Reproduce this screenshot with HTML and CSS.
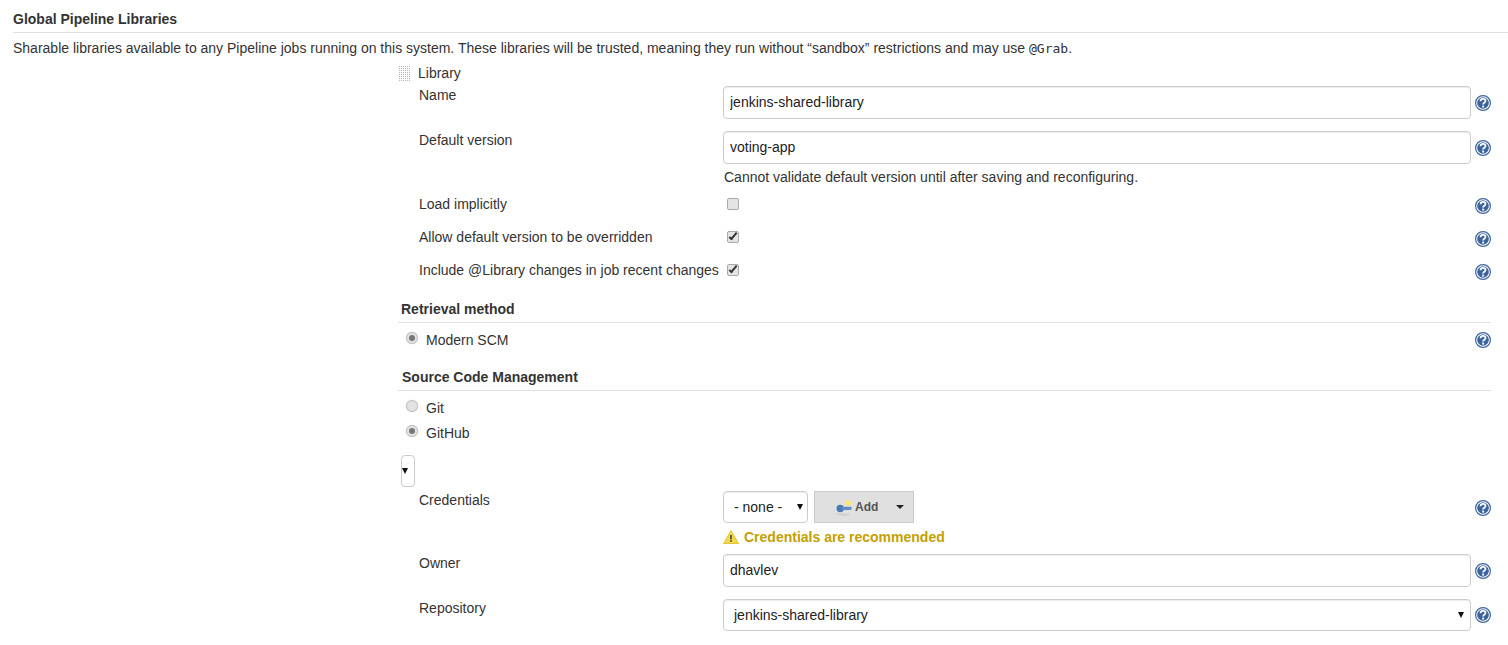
FILE: index.html
```html
<!DOCTYPE html>
<html lang="en">
<head>
    <meta charset="UTF-8">
    <title>Global Pipeline Libraries</title>
    <link rel="stylesheet" href="styles.css">
</head>
<body>
    <svg class="defs" width="0" height="0">
        <symbol id="help" viewBox="0 0 16 16">
            <circle cx="8" cy="8" r="7.4" fill="#fff" stroke="#3f66a0" stroke-width="1.2"/>
            <circle cx="8" cy="8" r="5.8" fill="#3d639c"/>
            <path d="M5.600 6.200c0-1.400 1-2.300 2.500-2.300s2.400.9 2.400 2.100c0 1.800-2.400 1.800-2.400 3.500" fill="none" stroke="#fff" stroke-width="1.800"/>
            <rect x="7.200" y="10.600" width="1.900" height="1.900" fill="#fff"/>
        </symbol>
    </svg>

    <h2 class="section-title">Global Pipeline Libraries</h2>
    <p class="description">Sharable libraries available to any Pipeline jobs running on this system. These libraries will be trusted, meaning they run without “sandbox” restrictions and may use <code>@Grab</code>.</p>

    <div class="library">
        <div class="library-head">
            <span class="grip"></span>
            <span>Library</span>
        </div>

        <div class="row row-input row-first">
            <label class="label">Name</label>
            <input class="text" type="text" value="jenkins-shared-library">
            <svg class="help"><use href="#help"/></svg>
        </div>
        <div class="row row-input">
            <label class="label">Default version</label>
            <input class="text" type="text" value="voting-app">
            <svg class="help"><use href="#help"/></svg>
        </div>
        <div class="note">Cannot validate default version until after saving and reconfiguring.</div>

        <div class="row row-check">
            <label class="label">Load implicitly</label>
            <input class="check" type="checkbox">
            <svg class="help"><use href="#help"/></svg>
        </div>
        <div class="row row-check">
            <label class="label">Allow default version to be overridden</label>
            <input class="check" type="checkbox" checked>
            <svg class="help"><use href="#help"/></svg>
        </div>
        <div class="row row-check">
            <label class="label">Include @Library changes in job recent changes</label>
            <input class="check" type="checkbox" checked>
            <svg class="help"><use href="#help"/></svg>
        </div>

        <h3 class="sub-title sub-retrieval">Retrieval method</h3>
        <div class="radio-row radio-scm">
            <span class="radio-label"><input class="radio" type="radio" name="retrieval" checked>Modern SCM</span>
            <svg class="help"><use href="#help"/></svg>
        </div>

        <h3 class="sub-title sub-source">Source Code Management</h3>
        <div class="radio-row radio-git">
            <span class="radio-label"><input class="radio" type="radio" name="scm">Git</span>
        </div>
        <div class="radio-row">
            <span class="radio-label"><input class="radio" type="radio" name="scm" checked>GitHub</span>
        </div>

        <button class="collapse" type="button"><span class="arrow"></span></button>

        <div class="row row-creds">
            <label class="label">Credentials</label>
            <div class="creds">
                <div class="select select-none">- none -<span class="arrow"></span></div>
                <div class="add">
                    <svg class="key" width="16" height="17" viewBox="0 0 16 17">
                        <ellipse cx="7" cy="15.500" rx="6.500" ry="1" fill="#cdcdcd"/>
                        <circle cx="12" cy="4" r="2.800" fill="#f5ea62"/>
                        <circle cx="4.200" cy="9.500" r="3.700" fill="#4a7ab5"/>
                        <path d="M6 7.800h9.500v2.400l-1 .8h-8.500z" fill="#5f8cc2"/>
                    </svg>
                    <span>Add</span>
                    <span class="add-arrow"></span>
                </div>
            </div>
            <svg class="help"><use href="#help"/></svg>
        </div>
        <div class="warning">
            <svg width="16" height="14" viewBox="0 0 16 14">
                <path d="M8 .5 15.500 13.500H.5z" fill="#f0d94c" stroke="#e2c63a" stroke-linejoin="round"/>
                <rect x="7.200" y="5" width="1.600" height="4.400" fill="#444"/>
                <rect x="7.200" y="10.200" width="1.600" height="1.600" fill="#444"/>
            </svg>
            <span>Credentials are recommended</span>
        </div>

        <div class="row row-input">
            <label class="label">Owner</label>
            <input class="text" type="text" value="dhavlev">
            <svg class="help"><use href="#help"/></svg>
        </div>
        <div class="row row-input row-repo">
            <label class="label">Repository</label>
            <div class="select select-wide">jenkins-shared-library<span class="arrow"></span></div>
            <svg class="help"><use href="#help"/></svg>
        </div>
    </div>
</body>
</html>
```

FILE: styles.css
```css
body {
    margin: 0;
    font-family: "Liberation Sans", Arial, sans-serif;
    font-size: 14px;
    line-height: 20px;
    color: #333;
    background: #fff;
    overflow: hidden;
}

.defs {
    position: absolute;
}

.section-title {
    margin: 9px 0 0 13px;
    padding-bottom: 3px;
    height: 20px;
    font-size: 14px;
    font-weight: bold;
    border-bottom: 1px solid #e0e0e0;
}

.description {
    margin: 5px 0 0 13px;
}

code {
    font-family: "DejaVu Sans Mono", monospace;
    font-size: 13px;
}

.library {
    margin: 4px 17px 0 398px;
}

.library-head {
    display: flex;
    align-items: center;
    height: 20px;
}

.grip {
    width: 12px;
    height: 17px;
    margin: 0 7px 0 1px;
    background-image:
        repeating-linear-gradient(0deg, #fff 0 1px, transparent 1px 2px),
        repeating-linear-gradient(90deg, #b4b4b4 0 1px, #fff 1px 2px);
}

.row {
    display: grid;
    grid-template-columns: 325px 748px 20px;
}

.row-input {
    height: 33px;
    margin-bottom: 12px;
    align-items: center;
}

.row-first {
    margin-top: 3px;
}

.label {
    padding-left: 21px;
    align-self: start;
}

.row-input .label,
.row-creds .label {
    margin-top: -1px;
}

.text,
.select {
    box-sizing: border-box;
    width: 100%;
    height: 33px;
    padding: 0 6px 2px;
    font: 14px "Liberation Sans", Arial, sans-serif;
    color: #222;
    background: #fff;
    border: 1px solid #ccc;
    border-radius: 4px;
    box-shadow: inset 0 1px 1px rgba(0, 0, 0, 0.075);
}

.help {
    width: 16px;
    height: 16px;
    justify-self: end;
}

.note {
    margin: -9px 0 0 326px;
    height: 27px;
}

.row-check {
    height: 33px;
}

.check {
    appearance: none;
    position: relative;
    width: 12px;
    height: 12px;
    margin: 4px 0 0 4px;
    background: #e4e4e4;
    border: 1px solid #aaa;
    border-radius: 2px;
}

.check:checked::after {
    content: "";
    position: absolute;
    left: 3px;
    top: -1px;
    width: 4px;
    height: 9px;
    border: solid #333;
    border-width: 0 2.500px 2.500px 0;
    transform: rotate(40deg);
    box-sizing: border-box;
}

.row-check .help {
    margin-top: 4px;
}

.sub-title {
    margin: 0;
    height: 23px;
    padding-left: 3px;
    font-size: 14px;
    font-weight: bold;
    border-bottom: 1px solid #e0e0e0;
}

.sub-retrieval {
    margin-top: 6px;
}

.sub-source {
    margin-top: 15px;
    padding-left: 4px;
}

.radio-row {
    display: flex;
    justify-content: space-between;
    align-items: center;
    height: 25px;
}

.radio-scm {
    margin-top: 4px;
}

.radio-git {
    margin-top: 4px;
}

.radio-label {
    display: flex;
    align-items: center;
    padding-left: 8px;
}

.radio {
    appearance: none;
    position: relative;
    width: 12px;
    height: 12px;
    margin: -3px 8px 0 0;
    background: #e2e2e2;
    border: 1px solid #c4c4c4;
    border-radius: 50%;
    box-shadow: 0 0 1px #bbb;
}

.radio:checked::after {
    content: "";
    position: absolute;
    left: 2px;
    top: 2px;
    width: 6px;
    height: 6px;
    border-radius: 50%;
    background: #777;
}

.collapse {
    display: flex;
    align-items: center;
    width: 14px;
    height: 32px;
    margin: 10px 0 4px 3px;
    padding: 0;
    background: #fff;
    border: 1px solid #ccc;
    border-radius: 4px;
}

.arrow {
    width: 0;
    height: 0;
    border-style: solid;
    border-width: 6px 3.500px 0;
    border-color: #111 transparent transparent;
}

.row-creds {
    height: 32px;
    align-items: center;
}

.row-creds .help {
    margin-top: 2px;
}

.creds {
    display: flex;
    gap: 6px;
}

.select {
    display: flex;
    align-items: center;
    justify-content: space-between;
    padding: 0 6px 0 10px;
}

.select-none {
    width: 85px;
    height: 32px;
    padding-right: 4px;
}

.select-wide {
    height: 32px;
    align-self: start;
}

.row-repo .help {
    margin-top: -1px;
}

.add {
    display: flex;
    align-items: center;
    box-sizing: border-box;
    width: 100px;
    height: 32px;
    padding-left: 21px;
    font-size: 12px;
    font-weight: bold;
    color: #555;
    background: #e0e0e0;
    border: 1px solid #ccc;
}

.key {
    margin-right: 3px;
}

.add-arrow {
    margin-left: 18px;
    border-style: solid;
    border-width: 4px 4px 0;
    border-color: #222 transparent transparent;
}

.warning {
    display: flex;
    align-items: center;
    gap: 5px;
    box-sizing: border-box;
    height: 31px;
    padding-bottom: 4px;
    margin-left: 325px;
    font-weight: bold;
    color: #c4a000;
}
```
